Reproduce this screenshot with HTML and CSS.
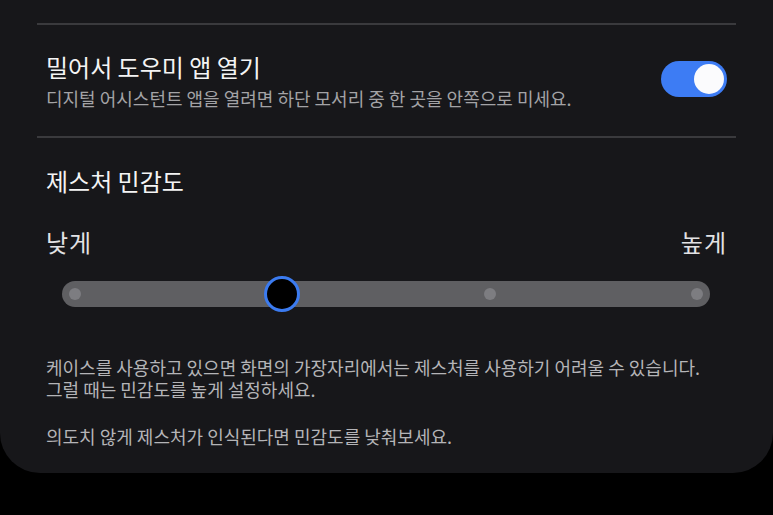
FILE: index.html
```html
<!DOCTYPE html>
<html>
    <head>
        <link rel="stylesheet" href="styles.css">
    </head>
    <body>
        <div class="panel">
            <div class="divider"></div>
            <div class="setting-row">
                <div class="setting-text">
                    <div class="setting-title">밀어서 도우미 앱 열기</div>
                    <div class="setting-desc">디지털 어시스턴트 앱을 열려면 하단 모서리 중 한 곳을 안쪽으로 미세요.</div>
                </div>
                <div class="toggle on">
                    <div class="toggle-knob"></div>
                </div>
            </div>
            <div class="divider"></div>
            <div class="section">
                <div class="section-title">제스처 민감도</div>
                <div class="range-labels">
                    <span>낮게</span>
                    <span>높게</span>
                </div>
                <div class="slider">
                    <div class="slider-track">
                        <span class="stop"></span>
                        <span class="stop current"></span>
                        <span class="stop"></span>
                        <span class="stop"></span>
                    </div>
                </div>
                <p class="note">케이스를 사용하고 있으면 화면의 가장자리에서는 제스처를 사용하기 어려울 수 있습니다.</p>
                <p class="note line">그럴 때는 민감도를 높게 설정하세요.</p>
                <p class="note para">의도치 않게 제스처가 인식된다면 민감도를 낮춰보세요.</p>
            </div>
        </div>
    </body>
</html>
```

FILE: styles.css
```css
* {
    margin: 0;
    padding: 0;
    box-sizing: border-box;
    font-family: "Noto Sans CJK KR", "Noto Sans", sans-serif;
}

body {
    background: #000;
    width: 773px;
    height: 515px;
    overflow: hidden;
}

.panel {
    background: #17171a;
    border-radius: 0 0 40px 40px;
    padding: 23px 0 26px;
}

.divider {
    height: 2px;
    margin: 0 37px;
    background: #3a3a3d;
}

.setting-row {
    display: flex;
    align-items: center;
    justify-content: space-between;
    padding: 27px 46px 27px;
}

.setting-title {
    font-size: 24px;
    line-height: 30px;
    color: #f4f4f4;
}

.setting-desc {
    margin-top: 5px;
    font-size: 18px;
    line-height: 22px;
    color: #a3a3a6;
}

.toggle {
    width: 66px;
    height: 36px;
    border-radius: 18px;
    background: #4a4a4d;
    padding: 3px;
    display: flex;
    margin-top: -4px;
}

.toggle.on {
    background: #3d7cf4;
    justify-content: flex-end;
}

.toggle-knob {
    width: 30px;
    height: 30px;
    border-radius: 50%;
    background: #fbfbfd;
}

.section {
    padding: 28px 0 0;
}

.section-title {
    padding: 0 46px;
    font-size: 24px;
    line-height: 30px;
    color: #f4f4f4;
}

.range-labels {
    display: flex;
    justify-content: space-between;
    margin-top: 32px;
    padding: 0 46px;
    font-size: 24px;
    line-height: 28px;
    letter-spacing: 1px;
    color: #e2e2e4;
}

.slider {
    height: 40px;
    margin: 18px 63px 0 62px;
    display: flex;
    align-items: center;
}

.slider-track {
    flex: 1;
    height: 26px;
    border-radius: 13px;
    background: #5f5f62;
    display: flex;
    align-items: center;
    justify-content: space-between;
    padding: 0 7px;
}

.stop {
    width: 12px;
    height: 12px;
    border-radius: 50%;
    background: #7d7d81;
}

.stop.current {
    width: 36px;
    height: 36px;
    margin: 0 -12px;
    background: #000;
    border: 3px solid #3b7bf0;
}

.note {
    padding: 0 46px;
    margin-top: 42px;
    font-size: 18px;
    line-height: 22px;
    color: #b4b4b7;
}

.note.line {
    margin-top: 0;
}

.note.para {
    margin-top: 25px;
}
```
